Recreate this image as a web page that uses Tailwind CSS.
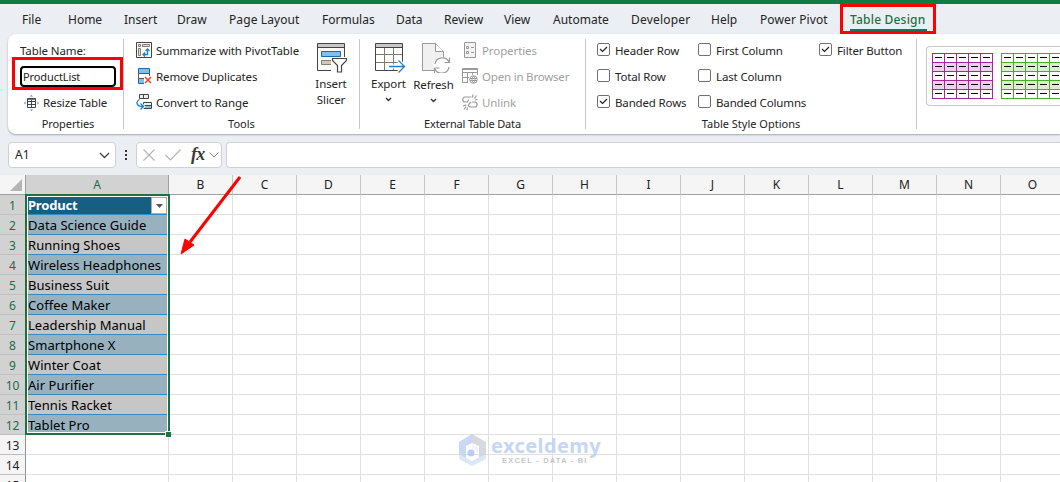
<!DOCTYPE html>
<html lang="en">

<head>
    <meta charset="UTF-8">
    <meta name="viewport" content="width=device-width, initial-scale=1.0">
    <title>Excel - Table Design</title>
    <script src="https://cdn.jsdelivr.net/npm/@tailwindcss/browser@4"></script>
</head>

<body class="relative w-[1060px] h-[482px] overflow-hidden bg-[#ebeef2] font-['Noto_Sans',sans-serif] text-[#242424] whitespace-nowrap">
    <!-- Title bar edge -->
    <div class="h-1 bg-[#107c41]"></div>

    <!-- Ribbon tabs -->
    <nav class="flex h-[30px] pl-[22px] text-[12px] leading-[31px]">
        <span class="w-[46px]">File</span>
        <span class="w-[56px]">Home</span>
        <span class="w-[53px]">Insert</span>
        <span class="w-[52px]">Draw</span>
        <span class="w-[93px] tracking-[0.1px]">Page Layout</span>
        <span class="w-[74px]">Formulas</span>
        <span class="w-[48px]">Data</span>
        <span class="w-[60px]">Review</span>
        <span class="w-[49px]">View</span>
        <span class="w-[78px]">Automate</span>
        <span class="w-[80px] tracking-[0.2px]">Developer</span>
        <span class="w-[49px]">Help</span>
        <span class="w-[90px] tracking-[0.1px]">Power Pivot</span>
        <span class="w-[77px] h-[27px] border-b-2 border-[#107c41] font-medium text-[#1a7343] tracking-[0.2px]">Table Design</span>
    </nav>

    <!-- Ribbon -->
    <section class="flex ml-2 h-[100px] w-[1052px] rounded-l-lg bg-white pt-1 text-[11.5px] tracking-[-0.1px] shadow-[0_1px_2px_rgba(0,0,0,0.3)]">
        <!-- Properties -->
        <div class="w-[115px] shrink-0">
            <div class="h-[26px] pl-3 leading-[26px]">Table Name:</div>
            <div class="flex h-[26px] items-center pl-3">
                <div class="mt-[-2px] h-[21px] w-[96px] rounded border-2 border-black pl-[1px] text-[11px] leading-[17px]">ProductList</div>
            </div>
            <div class="flex h-[26px] items-center pl-4">
                <svg width="16" height="16" viewBox="0 0 16 16" fill="none" class="mr-[3px] mt-[-1px]">
                    <path d="M3.5 3.5h8v9h-8zM3.5 6.5h8M3.5 9.500h8M7.500 5v7" stroke="#444" />
                    <path d="M4 4.500h7" stroke="#777" />
                    <path d="M6 1.500L7.500 0L9 1.500zM6 14.500L7.500 16L9 14.500zM1.500 6.500L0 8L1.500 9.500zM13.500 6.500L15 8L13.500 9.500z" fill="#2c8ac4" />
                </svg>
                Resize Table
            </div>
            <div class="h-4 pl-[5px] text-center text-[11px] leading-4 tracking-[-0.1px]">Properties</div>
        </div>
        <div class="mt-[1px] h-[90px] w-px shrink-0 bg-[#c8c8c8]"></div>

        <!-- Tools -->
        <div class="w-[235px] shrink-0">
            <div class="flex h-[78px]">
                <div class="w-[184px] pl-3">
                    <div class="flex h-[26px] items-center gap-1">
                        <svg width="16" height="16" viewBox="0 0 16 16" fill="none" class="mt-[-2px]">
                            <path d="M.5.5h15v15H.5z" fill="#fafafa" stroke="#444" />
                            <path d="M2.500 2.500h2v2h-2zM6.500 2.500h7v2h-7zM2.500 6.500h2v7h-2z" fill="#ddd" stroke="#8a7d70" />
                            <path d="M7 12.500h4.500V7M9 10.500L7 12.500l2 2M9.500 9l2-2l2 2" stroke="#1e82c5" stroke-width="1.300" />
                        </svg>
                        <span>Summarize with PivotTable</span>
                    </div>
                    <div class="flex h-[26px] items-center gap-1">
                        <svg width="16" height="16" viewBox="0 0 16 16" fill="none" class="mt-[-2px]">
                            <path d="M2.500.5h11v5h-11zM2.500 10.500h6v5h-6z" fill="#83bfe8" stroke="#1c6ba8" />
                            <path d="M2.500 5.500h11v5h-11z" fill="#fff" stroke="#555" />
                            <path d="M8 8h8v8H8z" fill="#fff" />
                            <path d="M9 9l6 6M15 9l-6 6" stroke="#e8472f" stroke-width="1.600" />
                        </svg>
                        <span>Remove Duplicates</span>
                    </div>
                    <div class="flex h-[26px] items-center gap-1">
                        <svg width="16" height="16" viewBox="0 0 16 16" fill="none" class="mt-[-2px]">
                            <path d="M3.500.5h9v4h-9zM7.500.5v4M7.500 8.500h8v6h-8z" fill="#eee" stroke="#444" />
                            <path d="M8 11.500h7" stroke="#444" />
                            <path d="M8 12h7v2H8z" fill="#83bfe8" />
                            <path d="M3.500 5.500C0 7.500 0 12.500 7 12.500M4.500 9.500l3 3l-3 3" stroke="#fff" stroke-width="3" />
                            <path d="M3.500 5.500C-.5 7.500 0 12.500 7 12.500M4.500 9.500l3 3l-3 3" stroke="#1e82c5" stroke-width="1.300" />
                        </svg>
                        <span>Convert to Range</span>
                    </div>
                </div>
                <div class="flex w-[46px] flex-col items-center pt-1 text-center leading-4">
                    <svg width="30" height="31" viewBox="0 0 30 31" fill="none" class="ml-[2px] mb-[3px] shrink-0">
                        <path d="M.5 1.500h27v27H.5z" fill="#fafafa" stroke="#444" />
                        <path d="M1 2h26v3H1z" fill="#c8c8c8" />
                        <path d="M.5 5.500h27" stroke="#444" />
                        <path d="M4.500 9.500h19v5h-19z" fill="#83bfe8" stroke="#1c6ba8" />
                        <path d="M4.500 18.500h12v4h-12z" fill="#c8c8c8" stroke="#8a7d70" />
                        <path d="M14 15h16v16H14z" fill="#fff" />
                        <path d="M15.500 16.500h14v2l-5 5v6.500h-4V23.500l-5-5z" fill="#fff" stroke="#444" stroke-width="1.200" />
                    </svg>
                    <span>Insert<br>Slicer</span>
                </div>
            </div>
            <div class="h-4 text-center text-[11px] leading-4 tracking-normal">Tools</div>
        </div>
        <div class="mt-[1px] h-[90px] w-px shrink-0 bg-[#c8c8c8]"></div>

        <!-- External Table Data -->
        <div class="w-[225px] shrink-0">
            <div class="flex h-[78px]">
                <div class="flex w-[48px] flex-col items-center pl-[9px] pt-1 leading-4">
                    <svg width="31" height="31" viewBox="0 0 31 31" fill="none" class="ml-[3px] mb-[3px] shrink-0">
                        <path d="M.5 1.500h27v27H.5z" fill="#fff" stroke="#444" />
                        <path d="M1 2h26v3H1z" fill="#c8c8c8" />
                        <path d="M1 12.500h26M1 20.500h26M9.500 6v22M18.500 6v22" stroke="#85776a" />
                        <path d="M.5 5.500h27" stroke="#444" />
                        <path d="M14 24.500h15M23.500 18.500l6 6l-6 6" stroke="#fff" stroke-width="4" />
                        <path d="M14 24.500h15M23.500 18.500l6 6l-6 6" stroke="#1e82c5" stroke-width="1.300" />
                    </svg>
                    <span>Export</span>
                    <svg width="7" height="5" viewBox="0 0 7 5" fill="none" class="mt-[5px] shrink-0"><path d="M1 1l2.500 2.500L6 1" stroke="#333" stroke-width="1.400" /></svg>
                </div>
                <div class="flex w-[53px] flex-col items-center pr-[2px] pt-1 leading-4">
                    <svg width="29" height="31" viewBox="0 0 29 31" fill="none" class="ml-[5px] mb-1 shrink-0">
                        <path d="M.5 1.500h13l8 8v19H.5z" fill="#f0f0f0" stroke="#999" />
                        <path d="M13.500 1.500v8h8" fill="#fff" stroke="#999" />
                        <circle cx="20" cy="23.500" r="9" fill="#fff" />
                        <path d="M13 22c1-7 11-8.500 14-2M27.500 15.500v5h-5M27 25c-1 7-11 8.500-14 2M12.500 31v-5h5" stroke="#999" stroke-width="1.200" />
                    </svg>
                    <span>Refresh</span>
                    <svg width="7" height="5" viewBox="0 0 7 5" fill="none" class="mt-[5px] shrink-0"><path d="M1 1l2.500 2.500L6 1" stroke="#333" stroke-width="1.400" /></svg>
                </div>
                <div class="pl-[1px] text-[#a0a0a0]">
                    <div class="flex h-[26px] items-center gap-1">
                        <svg width="16" height="16" viewBox="0 0 16 16" fill="none" stroke="#999" class="mt-[-2px]">
                            <path d="M2.500.5h11v15h-11z" fill="#f4f4f4" />
                            <path d="M4.500 4.500h2v2h-2zM4.500 9.500h2v2h-2zM9 5.500h3M9 10.500h3" />
                        </svg>
                        <span>Properties</span>
                    </div>
                    <div class="flex h-[26px] items-center gap-1">
                        <svg width="16" height="16" viewBox="0 0 16 16" fill="none" stroke="#999" class="mt-[-2px]">
                            <path d="M.5 14.500V.5h15V7M0 1.500h16M.5 4.500h15M.5 9.500H7M.5 14.500H6M5.500 4v10M10.500 4v3" />
                            <circle cx="11.500" cy="11.500" r="5" fill="#fff" stroke="none" />
                            <circle cx="11.500" cy="11.500" r="3.800" />
                            <path d="M8 10.500h7M8 12.500h7M11.500 8c-2 2-2 5 0 7c2-2 2-5 0-7" />
                        </svg>
                        <span class="tracking-[-0.2px]">Open in Browser</span>
                    </div>
                    <div class="flex h-[26px] items-center gap-1">
                        <svg width="16" height="16" viewBox="0 0 16 16" fill="none" stroke="#999" stroke-width="1.200" class="mt-[-2px]">
                            <path d="M9.500 3H3C0 3 0 8 3 8h2.500M7 5.500C5 8 5.500 8.500 5.500 8.500M9 8L7 10c-1.500 2.500 1 3 2 3h3.500c3.500 0 3.500-5 0-5H10M11 .5l-.5 3M14.500 1.500l-2 3M15.500 5.500l-2.500.5M4.500 11l-1.500.5M1 12l2.500-1M2 15.500l2-3M5.500 13.500L5 16" />
                        </svg>
                        <span>Unlink</span>
                    </div>
                </div>
            </div>
            <div class="h-4 text-center text-[11px] leading-4 tracking-[-0.15px]">External Table Data</div>
        </div>
        <div class="mt-[1px] h-[90px] w-px shrink-0 bg-[#c8c8c8]"></div>

        <!-- Table Style Options -->
        <div class="w-[330px] shrink-0">
            <div class="grid grid-cols-[101px_121px_1fr] grid-rows-[26px_26px_26px] pl-[11px]" id="options"></div>
            <div class="h-4 text-center text-[11px] leading-4 tracking-normal">Table Style Options</div>
        </div>
        <div class="mt-[1px] h-[90px] w-px shrink-0 bg-[#c8c8c8]"></div>

        <!-- Table styles gallery -->
        <div class="ml-[9px] mt-2 flex h-[60px] w-[134px] shrink-0 gap-2 overflow-hidden rounded-l border-y border-l border-[#c8c8c8] pl-[5px] pt-[6px]">
            <svg width="61" height="46" viewBox="0 0 61 46" shape-rendering="crispEdges" class="shrink-0">
                <path d="M0 0h61v46H0z" fill="#fff" />
                <path d="M0 9h61v9H0zM0 27h61v9H0z" fill="#f2ceef" />
                <path d="M.5.5h60v45H.5zM0 9.500h61M0 18.500h61M0 27.500h61M0 36.500h61M12.500 0v46M24.500 0v46M36.500 0v46M48.500 0v46" fill="none" stroke="#a02b93" />
                <path d="M3 4.500h58M3 13.500h58M3 22.500h58M3 31.500h58M3 40.500h58" stroke="#000" stroke-dasharray="7 5" />
            </svg>
            <svg width="61" height="46" viewBox="0 0 61 46" shape-rendering="crispEdges" class="shrink-0">
                <path d="M0 0h61v46H0z" fill="#fff" />
                <path d="M0 9h61v9H0zM0 27h61v9H0z" fill="#dcefcb" />
                <path d="M.5.5h60v45H.5zM0 9.500h61M0 18.500h61M0 27.500h61M0 36.500h61M12.500 0v46M24.500 0v46M36.500 0v46M48.500 0v46" fill="none" stroke="#4ea72e" />
                <path d="M3 4.500h58M3 13.500h58M3 22.500h58M3 31.500h58M3 40.500h58" stroke="#000" stroke-dasharray="7 5" />
            </svg>
        </div>
    </section>

    <!-- Formula bar -->
    <div class="flex h-[41px] pl-2 pt-2">
        <div class="flex h-[26px] w-[108px] shrink-0 items-center justify-between rounded border border-[#d1d1d1] bg-white pl-[6px] pr-[5px] text-[12px]">
            <span>A1</span>
            <svg width="11" height="7" viewBox="0 0 11 7" fill="none"><path d="M1 1l4.500 4.500L10 1" stroke="#444" stroke-width="1.300" /></svg>
        </div>
        <div class="flex h-[26px] w-5 shrink-0 flex-col items-center justify-center gap-[2px]">
            <i class="size-[2px] bg-[#333]"></i>
            <i class="size-[2px] bg-[#333]"></i>
            <i class="size-[2px] bg-[#333]"></i>
        </div>
        <div class="flex h-[26px] w-[86px] shrink-0 items-center rounded border border-[#d1d1d1] bg-white pl-[6px]">
            <svg width="12" height="12" viewBox="0 0 12 12" fill="none" class="mr-[10px] shrink-0"><path d="M.5.5l11 11M11.500.5l-11 11" stroke="#b5b5b5" stroke-width="1.200" /></svg>
            <svg width="16" height="12" viewBox="0 0 16 12" fill="none" class="mr-[10px] shrink-0"><path d="M.5 6l5 5L15.500.5" stroke="#b5b5b5" stroke-width="1.200" /></svg>
            <span class="mt-[-3px] w-[18px] shrink-0 font-['Liberation_Serif',serif] text-[18px] font-bold italic leading-5 tracking-[-0.8px] text-[#3a3a3a]">fx</span>
            <svg width="10" height="6" viewBox="0 0 10 6" fill="none" class="shrink-0"><path d="M.5.5L5 5L9.500.5" stroke="#888" /></svg>
        </div>
        <div class="ml-1 h-[26px] grow rounded-l border-y border-l border-[#d1d1d1] bg-white"></div>
    </div>

    <!-- Sheet -->
    <main id="sheet" class="relative h-[307px] w-[1060px] overflow-hidden bg-white">
        <div class="absolute left-[25px] top-[19px] h-[241px] w-[145px] border-2 border-[#1e7145]"></div>
        <div class="absolute left-[27px] top-[21px] h-[237px] w-[141px] border border-white"></div>
        <div class="absolute left-[165px] top-[256px] size-[6px] border-l border-t border-white bg-[#1e7145]"></div>
    </main>

    <!-- Watermark -->
    <div class="absolute left-[458px] top-[434px] flex opacity-80">
        <svg width="29" height="33" viewBox="0 0 29 33">
            <path d="M14 0L1 8v16l7 5V12l6-3z" fill="#bccff2" />
            <path d="M14 0l14 8v16l-7 3V12l-7-3z" fill="#cdd1d6" />
            <path d="M1 20l13 7l14-7v5l-14 7L1 25z" fill="#d6e2f5" />
            <path d="M14 10l6 3v6l-6-3z" fill="#eef2f8" />
            <circle cx="13" cy="19" r="3.500" fill="#a9c3f0" />
        </svg>
        <div class="pl-1">
            <div class="h-[22px] text-[20px] font-bold leading-[24px] tracking-[0.4px] text-[#b9cdf3]">exceldemy</div>
            <div class="pl-[11px] font-['Liberation_Sans',sans-serif] text-[7.5px] font-bold leading-[9px] tracking-[1.2px] text-[#b4b9bf]">EXCEL - DATA - BI</div>
        </div>
    </div>

    <!-- Highlights -->
    <div class="absolute left-[840px] top-1 h-[30px] w-[96px] border-3 border-[#f00]"></div>
    <div class="absolute left-[12px] top-[57px] h-[33px] w-[111px] border-3 border-[#f00]"></div>
    <svg width="64" height="82" viewBox="0 0 64 82" class="absolute left-[179px] top-[175px]">
        <path d="M61 2L11 67" stroke="#f00" stroke-width="3" />
        <path d="M2 79l4-15l9 6z" fill="#f00" stroke="#f00" />
    </svg>

    <script>
        const options = [
            ['Header Row', true], ['First Column', false], ['Filter Button', true],
            ['Total Row', false], ['Last Column', false], null,
            ['Banded Rows', true], ['Banded Columns', false], null
        ];
        document.getElementById('options').innerHTML = options.map(o => !o ? '<div></div>' : `
            <div class="flex items-center gap-[5px]">
                <svg width="13" height="13" viewBox="0 0 13 13" fill="none" class="mt-[-3px] shrink-0">
                    <rect x=".5" y=".5" width="12" height="12" rx="1.500" stroke="#707070" />
                    ${o[1] ? '<path d="M3 6l2.500 2.500L10 4" stroke="#222" stroke-width="1.200" />' : ''}
                </svg>
                <span class="tracking-[-0.15px]">${o[0]}</span>
            </div>`).join('');

        const products = ['Product', 'Data Science Guide', 'Running Shoes', 'Wireless Headphones', 'Business Suit', 'Coffee Maker',
            'Leadership Manual', 'Smartphone X', 'Winter Coat', 'Air Purifier', 'Tennis Racket', 'Tablet Pro'];
        const cols = 'BCDEFGHIJKLMNO'.split('');

        let html = `<div class="flex h-5 w-[1065px] bg-[#f5f5f5] text-center text-[12px] leading-[20px] text-[#222]">
            <div class="flex w-[26px] shrink-0 items-end justify-end border-b border-r border-[#a0a0a0] pb-[3px] pr-[3px]">
                <svg width="12" height="12" viewBox="0 0 12 12"><path d="M12 0v12H0z" fill="#b4b4b4" /></svg>
            </div>
            <div class="w-[143px] shrink-0 border-b border-r border-[#a0a0a0] bg-[#d2d2d2] text-[#1e6b4a]">A</div>
            ${cols.map(c => `<div class="w-16 shrink-0 border-b border-r border-b-[#a0a0a0] border-r-[#c8c8c8]">${c}</div>`).join('')}
        </div>`;

        for (let r = 0; r < 15; r++) {
            const name = products[r];
            const head = name ? 'bg-[#d2d2d2] text-[#1e6b4a]' : 'bg-[#f5f5f5] text-[#222]';
            let cell = 'border-b border-r border-[#e0e0e0]';
            if (r === 0) cell = 'bg-[#156082] text-white font-bold tracking-[-0.2px] border-b border-[#3b8ab4]';
            else if (name) cell = (r % 2 ? 'bg-[#97b1bf]' : 'bg-[#c6c6c6]') + ' text-black tracking-[0.05px] border-b border-[#3b8ab4]';
            html += `<div class="flex h-5 text-[13px] leading-[21px]">
                <div class="w-[26px] shrink-0 border-b border-r border-b-[#c0c0c0] border-r-[#909090] text-center text-[12px] ${head}">${r + 1}</div>
                <div class="flex w-[143px] shrink-0 justify-between pl-[2px] pr-[2px] ${cell}">
                    <span>${name || ''}</span>
                    ${r === 0 ? `<span class="mt-[2px] flex h-[17px] w-4 items-center justify-center border border-[#ababab] bg-white">
                        <svg width="7" height="4" viewBox="0 0 7 4"><path d="M0 0h7L3.500 4z" fill="#555" /></svg></span>` : ''}
                </div>
                ${cols.map(() => '<div class="w-16 shrink-0 border-b border-r border-[#e0e0e0]"></div>').join('')}
            </div>`;
        }
        document.getElementById('sheet').insertAdjacentHTML('afterbegin', html);
    </script>
</body>

</html>
